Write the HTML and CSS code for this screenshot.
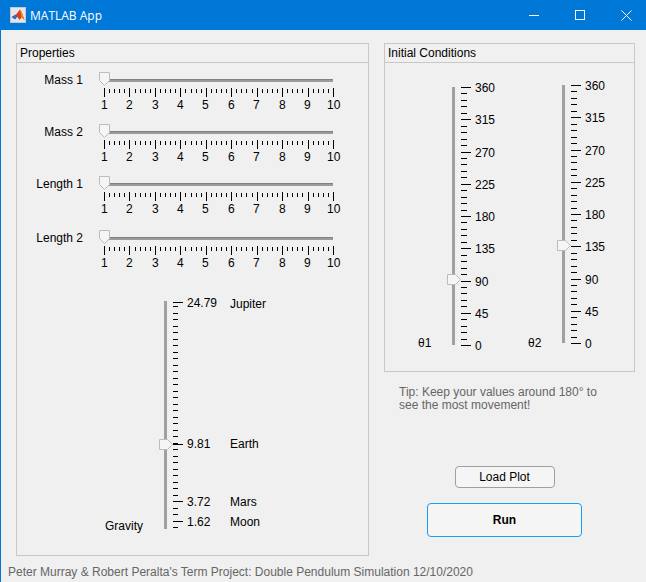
FILE: index.html
```html
<!DOCTYPE html>
<html lang="en">
<head>
  <meta charset="UTF-8">
  <title>MATLAB App</title>
  <link rel="stylesheet" href="styles.css">
</head>
<body>
  <div class="window">
    <div class="titlebar">
      <svg class="app-icon" width="16" height="16" viewBox="0 0 16 16">
        <rect x="0.5" y="0.5" width="15" height="15" fill="#e4e6ec" stroke="#c4c8d0"/>
        <path d="M2 10 L6 7.5 L8 5 L10 2.5 L12 6 L14.5 13 L11.5 10.5 L9.5 13 L7 9.5 L5 12 Z" fill="#d8401c"/>
        <path d="M1.5 10 L6 7.5 L7.5 9.5 L5 12.5 Z" fill="#2f6cb4"/>
        <path d="M10 2.5 L12 6 L14.5 13 L11.5 10.5 Z" fill="#f08a1c"/>
      </svg>
      <span class="app-title">MATLAB App</span>
      <div class="controls">
        <button class="ctl"><svg width="10" height="10" viewBox="0 0 10 10"><path d="M0 5.5H10" stroke="#fff"/></svg></button>
        <button class="ctl"><svg width="10" height="10" viewBox="0 0 10 10"><rect x="0.5" y="0.5" width="9" height="9" fill="none" stroke="#fff"/></svg></button>
        <button class="ctl"><svg width="11" height="11" viewBox="0 0 11 11"><path d="M0.5 0.5L10.5 10.5M10.5 0.5L0.5 10.5" stroke="#fff"/></svg></button>
      </div>
    </div>

    <div class="content">
      <section class="panel props">
        <h3 class="panel-title">Properties</h3>
        <div class="h-rows">
          <div class="h-row"><span class="h-label">Mass 1</span><div class="hslider"></div></div>
          <div class="h-row"><span class="h-label">Mass 2</span><div class="hslider"></div></div>
          <div class="h-row"><span class="h-label">Length 1</span><div class="hslider"></div></div>
          <div class="h-row row-last"><span class="h-label">Length 2</span><div class="hslider"></div></div>
        </div>
        <div class="gravity">
          <span class="gravity-label">Gravity</span>
          <div class="vslider gravity-slider" data-kind="gravity"></div>
        </div>
      </section>

      <div class="side">
        <section class="panel init">
          <h3 class="panel-title">Initial Conditions</h3>
          <div class="angles">
            <div class="angle angle-1">
              <span class="side-label">θ1</span>
              <div class="vslider" data-kind="angle" data-value="92"></div>
            </div>
            <div class="angle angle-2">
              <span class="side-label">θ2</span>
              <div class="vslider" data-kind="angle" data-value="137"></div>
            </div>
          </div>
        </section>
        <p class="tip">Tip: Keep your values around 180° to<br>see the most movement!</p>
        <div class="actions">
          <button class="btn load">Load Plot</button>
          <button class="btn run">Run</button>
        </div>
      </div>
    </div>

    <p class="credits">Peter Murray &amp; Robert Peralta's Term Project: Double Pendulum Simulation 12/10/2020</p>
  </div>
  <script src="app.js"></script>
</body>
</html>
```

FILE: styles.css
```css
* {
  box-sizing: border-box;
}
body {
  margin: 0;
  font-family: "Liberation Sans", Arial, sans-serif;
  font-size: 12px;
  color: #000;
  background: #f0f0f0;
}
.window {
  width: 646px;
  height: 582px;
  overflow: hidden;
  background: #f0f0f0;
  border-left: 1px solid #0078d7;
}
.titlebar {
  display: flex;
  align-items: center;
  height: 30px;
  margin-left: -1px;
  padding-left: 10px;
  background: #0078d7;
  color: #fff;
}
.app-title {
  margin-left: 4px;
  font-family: "Open Sans", sans-serif;
  font-size: 12px;
}
.controls {
  display: flex;
  margin-left: auto;
  margin-right: -3px;
}
.ctl {
  display: flex;
  align-items: center;
  justify-content: center;
  width: 46px;
  height: 30px;
  padding: 0;
  background: none;
  border: none;
}

.content {
  display: flex;
  gap: 15px;
  padding: 13px 0 0 15px;
}
.panel {
  border: 1px solid #c8c8c8;
}
.panel-title {
  height: 19px;
  margin: 0;
  padding: 2px 0 0 3px;
  font-size: 12px;
  font-weight: normal;
  border-bottom: 1px solid #c8c8c8;
}
.props {
  width: 353px;
  height: 513px;
}
.side {
  width: 251px;
}
.init {
  height: 329px;
}

.h-rows {
  padding-top: 9px;
}
.h-row {
  display: flex;
  height: 52px;
}
.row-last {
  margin-top: 2px;
}
.h-label {
  width: 66px;
  margin-top: 1px;
  text-align: right;
}
.hslider {
  position: relative;
  width: 240px;
  height: 46px;
  margin-left: 21px;
}
.track-h {
  position: absolute;
  left: 0;
  top: 7px;
  width: 229px;
  height: 3px;
  background: #9b9b9b;
  border-top: 1px solid #808080;
}
.thumb {
  position: absolute;
}
.hslider .thumb {
  left: -5px;
  top: 0;
}
.ticks {
  position: absolute;
  left: 0;
  top: 0;
}
.tick-label {
  position: absolute;
  line-height: 14px;
  white-space: nowrap;
}

.gravity {
  position: relative;
  margin-top: 19px;
  height: 240px;
}
.gravity-label {
  position: absolute;
  left: 88px;
  top: 218px;
}
.gravity-slider {
  margin-left: 147px;
}
.vslider {
  position: relative;
  width: 76px;
  height: 240px;
}
.gravity-slider {
  width: 100px;
}
.track-v {
  position: absolute;
  left: 0;
  top: 0;
  width: 3px;
  background: #a0a0a0;
}
.angles {
  display: flex;
  padding: 24px 0 0 33px;
}
.angle {
  display: flex;
  gap: 22px;
}
.angle .side-label {
  width: 12px;
  margin-top: 249px;
}
.angle-2 .vslider {
  margin-top: -2px;
}
.angle .vslider {
  height: 262px;
}

.tip {
  margin: 14px 0 0 15px;
  line-height: 13px;
  color: #666;
}
.actions {
  display: flex;
  flex-direction: column;
  align-items: center;
  margin-top: 54px;
  margin-left: 43px;
  width: 155px;
}
.btn {
  font-family: "Liberation Sans", Arial, sans-serif;
  font-size: 12px;
  color: #000;
  background: #f5f5f5;
  padding: 0;
}
.load {
  width: 100px;
  height: 22px;
  border: 1px solid #a0a0a0;
  border-radius: 4px;
}
.run {
  width: 155px;
  height: 34px;
  margin-top: 15px;
  font-weight: bold;
  border: 1px solid #1c9cf0;
  border-radius: 4px;
}
.credits {
  margin: 9px 0 0 7px;
  line-height: 14px;
  color: #666;
}
```

FILE: app.js
```js
const SVGNS = 'http://www.w3.org/2000/svg';

function ticksSvg(w, h, d) {
  const svg = document.createElementNS(SVGNS, 'svg');
  svg.setAttribute('class', 'ticks');
  svg.setAttribute('width', w);
  svg.setAttribute('height', h);
  const path = document.createElementNS(SVGNS, 'path');
  path.setAttribute('d', d);
  path.setAttribute('stroke', '#000');
  svg.appendChild(path);
  return svg;
}

function thumb(points, w, h, left, top) {
  const svg = document.createElementNS(SVGNS, 'svg');
  svg.setAttribute('class', 'thumb');
  svg.setAttribute('width', w);
  svg.setAttribute('height', h);
  if (left !== undefined) {
    svg.style.left = left + 'px';
    svg.style.top = top + 'px';
  }
  const poly = document.createElementNS(SVGNS, 'polygon');
  poly.setAttribute('points', points);
  poly.setAttribute('fill', '#f5f5f5');
  poly.setAttribute('stroke', '#bcbcbc');
  svg.appendChild(poly);
  return svg;
}

function label(text, left, top) {
  const el = document.createElement('span');
  el.className = 'tick-label';
  el.textContent = text;
  el.style.left = left + 'px';
  el.style.top = top + 'px';
  return el;
}

function buildHorizontal(el) {
  const track = document.createElement('div');
  track.className = 'track-h';
  el.appendChild(track);

  let d = '';
  for (let i = 0; i <= 45; i++) {
    const x = Math.round(i * 229 / 45) + 0.5;
    d += i % 5 ? `M${x} 17V21` : `M${x} 16V25`;
  }
  el.appendChild(ticksSvg(232, 30, d));

  for (let n = 1; n <= 10; n++) {
    const x = (n - 1) * 229 / 9;
    const lab = label(String(n), 0, 26);
    lab.style.left = Math.round(x - (n === 10 ? 6.5 : 3.3)) + 'px';
    el.appendChild(lab);
  }
  el.appendChild(thumb('5.5,13.5 0.5,8.5 0.5,0.5 10.5,0.5 10.5,8.5', 11, 15));
}

function buildAngle(el) {
  const len = 258;
  const track = document.createElement('div');
  track.className = 'track-v';
  track.style.height = len + 'px';
  el.appendChild(track);

  let d = '';
  for (let i = 0; i <= 40; i++) {
    const y = Math.round(i * len / 40) + 0.5;
    d += `M9 ${y}H${i % 5 ? 15 : 19}`;
  }
  el.appendChild(ticksSvg(24, len + 4, d));

  for (let v = 0; v <= 360; v += 45) {
    const y = Math.round((360 - v) / 360 * len);
    el.appendChild(label(String(v), 23, y - 6));
  }
  const y = Math.round((360 - Number(el.dataset.value)) / 360 * len);
  el.appendChild(thumb('0.5,0.5 8.5,0.5 13.5,5.5 8.5,10.5 0.5,10.5', 15, 11, -5, y - 5));
}

function buildGravity(el) {
  const track = document.createElement('div');
  track.className = 'track-v';
  track.style.height = '228px';
  el.appendChild(track);

  let d = '';
  for (let i = 0; i <= 35; i++) {
    const y = Math.round(i * 227 / 35) - 0.5;
    d += `M9 ${y}H14`;
  }
  // tick offset, value, planet, label tops
  const marks = [
    [1, '24.79', 'Jupiter', -5, -4],
    [143, '9.81', 'Earth', 136, 136],
    [200, '3.72', 'Mars', 194, 194],
    [220, '1.62', 'Moon', 214, 214]
  ];
  for (const m of marks) {
    d += `M9 ${m[0] + 0.5}H19`;
    el.appendChild(label(m[1], 23, m[3]));
    el.appendChild(label(m[2], 66, m[4]));
  }
  el.appendChild(ticksSvg(24, 232, d));
  el.appendChild(thumb('0.5,0.5 8.5,0.5 13.5,5.5 8.5,10.5 0.5,10.5', 15, 11, -5, 138));
}

document.querySelectorAll('.hslider').forEach(buildHorizontal);
document.querySelectorAll('.vslider').forEach(el => {
  if (el.dataset.kind === 'gravity') buildGravity(el);
  else buildAngle(el);
});
```
